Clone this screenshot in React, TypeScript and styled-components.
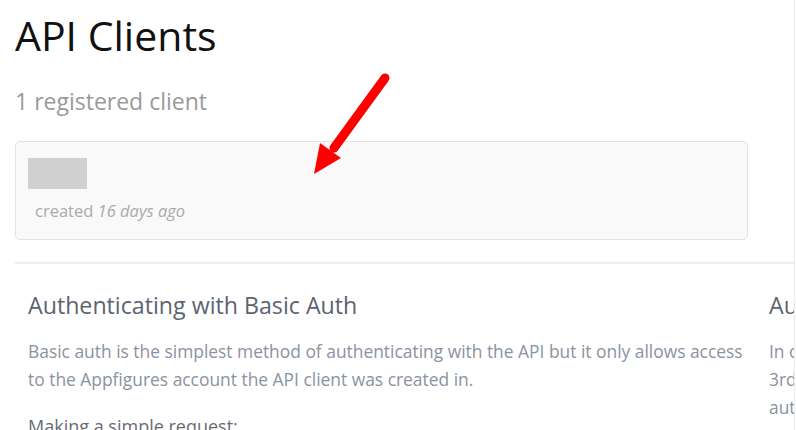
import React from "react";
import styled, { createGlobalStyle } from "styled-components";

const Global = createGlobalStyle`
  html, body { margin: 0; padding: 0; background: #fff; }
  body { font-family: "Open Sans", "Noto Sans", sans-serif; overflow: hidden; }
`;

const Page = styled.div`
  position: relative;
  width: 795px;
  height: 430px;
  border-right: 1px solid #ececec;
  overflow: hidden;
  padding-left: 15px;
  box-sizing: border-box;
`;

const Title = styled.h1`
  margin: 0;
  padding-top: 10px;
  font-size: 41px;
  line-height: 50px;
  font-weight: 400;
  color: #111;
`;

const Subtitle = styled.h2`
  margin: 26px 0 0;
  font-size: 23px;
  line-height: 30px;
  font-weight: 400;
  color: #9a9a9a;
`;

const Card = styled.div`
  margin-top: 25px;
  width: 733px;
  height: 99px;
  box-sizing: border-box;
  background: #f9f9f9;
  border: 1px solid #e6e2e2;
  border-radius: 5px;
  padding: 16px 0 0 12px;
`;

const Redacted = styled.div`
  width: 59px;
  height: 31px;
  background: #d0d0d0;
`;

const Meta = styled.div`
  margin: 11px 0 0 7px;
  font-size: 16.5px;
  line-height: 22px;
  color: #aaa;
  em { font-style: italic; }
`;

const Divider = styled.hr`
  margin: 22px 0 0;
  border: 0;
  border-top: 2px solid #eeeeee;
`;

const Columns = styled.div`
  display: grid;
  grid-template-columns: 726px 726px;
  column-gap: 15px;
  padding-left: 13px;
  padding-top: 25px;
`;

const Section = styled.section``;

const SectionTitle = styled.h3`
  margin: 0;
  font-size: 23.2px;
  line-height: 32px;
  font-weight: 400;
  color: #5c6470;
`;

const Para = styled.p`
  margin: 16px 0 0;
  font-size: 17.4px;
  line-height: 28px;
  color: #8a93a1;
  white-space: nowrap;
`;

const SubHead = styled.p`
  margin: 19px 0 0;
  font-size: 18px;
  line-height: 28px;
  color: #666b73;
`;

const Arrow = styled.svg`
  position: absolute;
  left: 300px;
  top: 65px;
`;

export default function App() {
  return (
    <>
      <Global />
      <Page>
        <Title>API Clients</Title>
        <Subtitle>1 registered client</Subtitle>
        <Card>
          <Redacted />
          <Meta>
            created <em>16 days ago</em>
          </Meta>
        </Card>
        <Divider />
        <Columns>
          <Section>
            <SectionTitle>Authenticating with Basic Auth</SectionTitle>
            <Para>
              Basic auth is the simplest method of authenticating with the API but it only allows access
              <br />
              to the Appfigures account the API client was created in.
            </Para>
            <SubHead>Making a simple request:</SubHead>
          </Section>
          <Section>
            <SectionTitle>Authenticating with OAuth</SectionTitle>
            <Para>
              In order to access data on behalf of other Appfigures users, including accounts of
              <br />
              3rd party users, you'll need to use OAuth, which lets users securely
              <br />
              authorize your app to access their data without sharing their credentials.
            </Para>
          </Section>
        </Columns>
        <Arrow width="100" height="120" viewBox="300 65 100 120">
          <line x1="385" y1="78" x2="334" y2="148" stroke="#ff0000" strokeWidth="9" strokeLinecap="round" />
          <polygon points="314,174 320,143 341,158" fill="#ff0000" />
        </Arrow>
      </Page>
    </>
  );
}
